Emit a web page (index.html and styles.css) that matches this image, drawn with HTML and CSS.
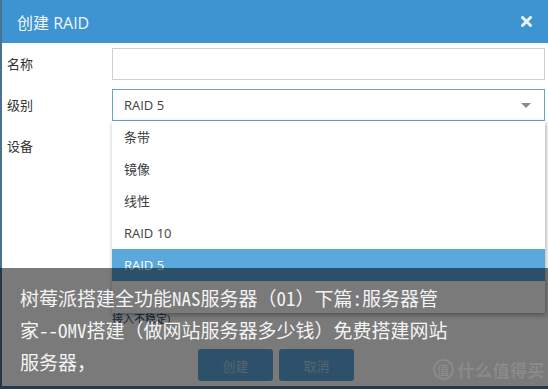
FILE: index.html
```html
<!DOCTYPE html>
<html lang="zh-CN">
<head>
  <meta charset="UTF-8">
  <meta name="viewport" content="width=device-width, initial-scale=1.0">
  <title>创建 RAID</title>
  <link rel="stylesheet" href="styles.css">
</head>
<body>
  <div class="page">
    <div class="dialog">
      <div class="dialog-header">
        <span class="dialog-title">创建 RAID</span>
        <span class="dialog-close">
          <svg width="11" height="11" viewBox="0 0 11 11"><path d="M1.5 1.5 L9.5 9.5 M9.5 1.5 L1.5 9.5" stroke="#eef2f6" stroke-width="3" stroke-linecap="round"/></svg>
        </span>
      </div>

      <form class="dialog-form">
        <div class="form-row">
          <label>名称</label>
          <input type="text" class="field">
        </div>
        <div class="form-row">
          <label>级别</label>
          <div class="select">
            <div class="field select-box">
              RAID 5
              <span class="select-arrow"></span>
            </div>
            <ul class="select-list">
              <li>条带</li>
              <li>镜像</li>
              <li>线性</li>
              <li>RAID 10</li>
              <li class="selected">RAID 5</li>
            </ul>
          </div>
        </div>
        <div class="form-row">
          <label>设备</label>
          <div class="device-grid">
            <span class="device-note">接入不稳定)</span>
          </div>
        </div>
      </form>

      <div class="dialog-buttons">
        <button type="button" class="btn">创建</button>
        <button type="button" class="btn">取消</button>
      </div>
    </div>

    <div class="caption-overlay">
      <p class="caption">树莓派搭建全功能NAS服务器（01）下篇:服务器管<br>家--OMV搭建（做网站服务器多少钱）免费搭建网站<br>服务器，</p>
      <div class="watermark">
        <span class="watermark-logo">值</span>
        <span class="watermark-text">什么值得买</span>
      </div>
    </div>
  </div>
</body>
</html>
```

FILE: styles.css
```css
* {
  margin: 0;
  padding: 0;
  box-sizing: border-box;
}

body {
  font-family: 'Open Sans', 'Noto Sans CJK SC', sans-serif;
  font-size: 13px;
  color: #333;
  background: #fff;
}

.page {
  position: relative;
  width: 548px;
  height: 389px;
  overflow: hidden;
}

.dialog {
  height: 389px;
  border-left: 2px solid #4a7190;
  border-bottom: 3px solid #4f7896;
  background: #fff;
}

.dialog-header {
  height: 43px;
  background: #3d94d0;
  display: flex;
  align-items: center;
  justify-content: space-between;
  padding: 0 15px 0 15px;
}

.dialog-title {
  color: #f2f7fb;
  font-size: 16px;
}

.dialog-close {
  display: flex;
  width: 11px;
  height: 11px;
  margin-right: 1px;
}

.dialog-form {
  padding: 5px 3px 0 5px;
}

.form-row {
  display: grid;
  grid-template-columns: 105px 1fr;
  margin-bottom: 9px;
}

.form-row label {
  line-height: 32px;
  color: #333;
}

.field {
  width: 100%;
  height: 32px;
  border: 1px solid #cfcfcf;
  background: #fff;
  font: inherit;
}

.select {
  position: relative;
}

.select-box {
  border-color: #6aa5c8;
  display: flex;
  align-items: center;
  padding-left: 11px;
  color: #404040;
}

.select-arrow {
  position: absolute;
  right: 14px;
  top: 14px;
  border-left: 5px solid transparent;
  border-right: 5px solid transparent;
  border-top: 5px solid #8a8a8a;
}

.select-list {
  position: absolute;
  top: 100%;
  left: 0;
  right: 0;
  height: 192px;
  list-style: none;
  background: #fff;
  box-shadow: 1px 2px 5px rgba(0, 0, 0, 0.35);
  z-index: 2;
}

.select-list li {
  height: 32px;
  line-height: 32px;
  padding-left: 12px;
  color: #404040;
}

.select-list li.selected {
  background: #5aa8dc;
  color: #fff;
}

.device-grid {
  height: 200px;
  display: flex;
  flex-direction: column;
  justify-content: flex-end;
  padding-bottom: 4px;
}

.device-note {
  line-height: 14px;
  font-size: 11px;
  color: #2a4a6e;
}

.dialog-buttons {
  display: flex;
  justify-content: center;
  gap: 6px;
  padding-top: 10px;
  padding-left: 2px;
}

.btn {
  width: 75px;
  height: 32px;
  border: none;
  border-radius: 3px;
  background: #5fa9dd;
  color: #b4d3ea;
  font-family: inherit;
  font-size: 13px;
}

.caption-overlay {
  position: absolute;
  left: 0;
  right: 0;
  top: 268px;
  bottom: 0;
  background: rgba(0, 0, 0, 0.52);
  z-index: 5;
}

.caption {
  padding: 14px 0 0 20px;
  font-family: 'Noto Sans Mono CJK SC', 'Noto Sans CJK SC', sans-serif;
  font-size: 19px;
  line-height: 32px;
  color: #f4f4f4;
}

.watermark {
  position: absolute;
  right: 3px;
  bottom: 7px;
  display: flex;
  align-items: center;
  gap: 4px;
  color: rgba(255, 255, 255, 0.13);
  font-family: 'Noto Sans CJK SC', sans-serif;
  font-weight: 700;
}

.watermark-logo {
  width: 21px;
  height: 21px;
  border: 2px solid rgba(255, 255, 255, 0.13);
  border-radius: 50%;
  font-size: 12px;
  line-height: 17px;
  text-align: center;
}

.watermark-text {
  font-size: 17px;
  letter-spacing: 0.5px;
}
```
